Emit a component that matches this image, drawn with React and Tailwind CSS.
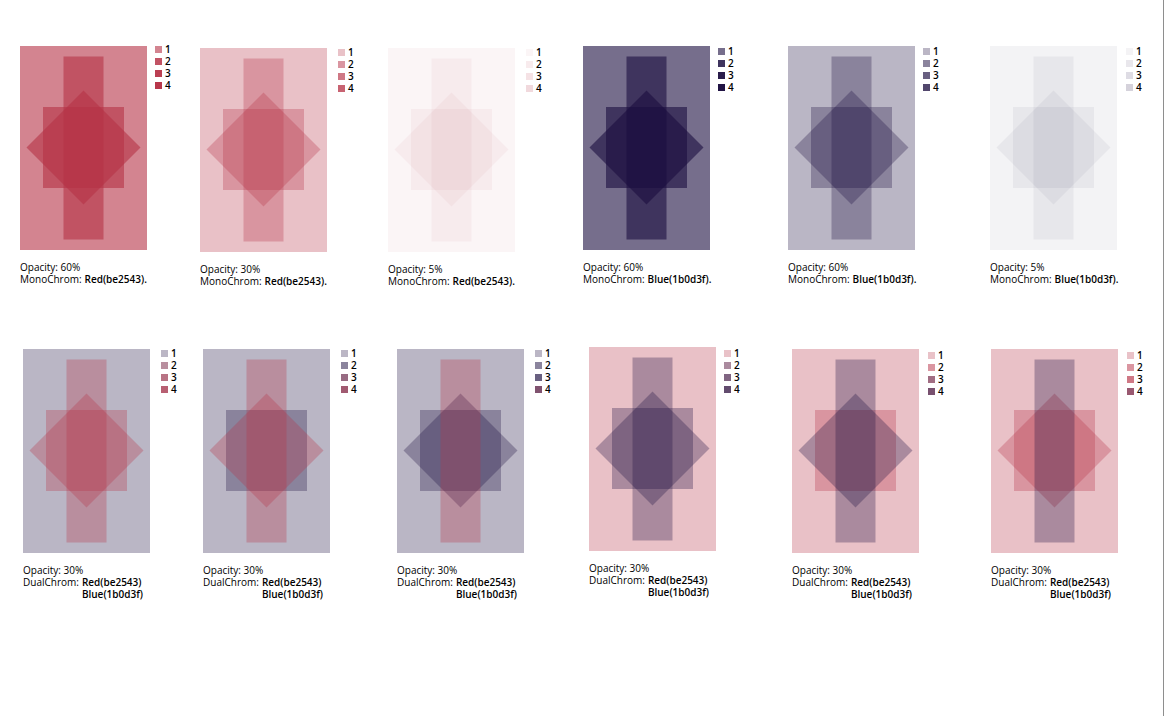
const RED = "#b63246";
const BLUE = "#1b0d3f";

// layers are listed bottom to top: sheet, square, diamond, bar
const rowOne = [
  { box: "ml-[20px]", gap: "ml-[8px]", key: "-mt-[3px]", op: 0.6, layers: [RED, RED, RED, RED], label: "Opacity: 60%", mode: "MonoChrom:", names: ["Red(be2543)."] },
  { box: "ml-[29px] mt-[2px]", gap: "ml-[11px]", key: "-mt-[2px]", op: 0.3, layers: [RED, RED, RED, RED], label: "Opacity: 30%", mode: "MonoChrom:", names: ["Red(be2543)."] },
  { box: "ml-[34px] mt-[2px]", gap: "ml-[11px]", key: "-mt-[2px]", op: 0.05, layers: [RED, RED, RED, RED], label: "Opacity: 5%", mode: "MonoChrom:", names: ["Red(be2543)."] },
  { box: "ml-[41px]", gap: "ml-[8px]", key: "-mt-[1px]", op: 0.6, layers: [BLUE, BLUE, BLUE, BLUE], label: "Opacity: 60%", mode: "MonoChrom:", names: ["Blue(1b0d3f)."] },
  { box: "ml-[54px]", gap: "ml-[8px]", key: "-mt-[1px]", op: 0.3, layers: [BLUE, BLUE, BLUE, BLUE], label: "Opacity: 60%", mode: "MonoChrom:", names: ["Blue(1b0d3f)."] },
  { box: "ml-[51px]", gap: "ml-[9px]", key: "-mt-[1px]", op: 0.05, layers: [BLUE, BLUE, BLUE, BLUE], label: "Opacity: 5%", mode: "MonoChrom:", names: ["Blue(1b0d3f)."] },
];

const dual = ["Red(be2543)", "Blue(1b0d3f)"];

const rowTwo = [
  { box: "ml-[23px] mt-[2px]", gap: "ml-[11px]", key: "-mt-[2px]", op: 0.3, layers: [BLUE, RED, RED, RED] },
  { box: "ml-[26px] mt-[2px]", gap: "ml-[11px]", key: "-mt-[2px]", op: 0.3, layers: [BLUE, BLUE, RED, RED] },
  { box: "ml-[40px] mt-[2px]", gap: "ml-[11px]", key: "-mt-[2px]", op: 0.3, layers: [BLUE, BLUE, BLUE, RED] },
  { box: "ml-[38px]", gap: "ml-[8px]", key: "mt-0", op: 0.3, layers: [RED, BLUE, BLUE, BLUE] },
  { box: "ml-[52px] mt-[2px]", gap: "ml-[9px]", key: "mt-0", op: 0.3, layers: [RED, RED, BLUE, BLUE] },
  { box: "ml-[47px] mt-[2px]", gap: "ml-[9px]", key: "mt-0", op: 0.3, layers: [RED, RED, RED, BLUE] },
].map((p) => ({ ...p, label: "Opacity: 30%", mode: "DualChrom:", names: dual }));

function hexToRgb(hex) {
  const n = parseInt(hex.slice(1), 16);
  return [(n >> 16) & 255, (n >> 8) & 255, n & 255];
}

// colour after stacking the first `count` layers on white paper
function stacked(layers, op, count) {
  let rgb = [255, 255, 255];
  layers.slice(0, count).forEach((hex) => {
    const c = hexToRgb(hex);
    rgb = rgb.map((v, i) => v * (1 - op) + c[i] * op);
  });
  return `rgb(${rgb.map(Math.round).join(",")})`;
}

function Shapes({ layers, op }) {
  const [sheet, square, diamond, bar] = layers;
  return (
    <svg width="127" height="204" viewBox="0 0 127 204" className="block">
      <rect x="0" y="0" width="127" height="204" fill={sheet} fillOpacity={op} />
      <rect x="23" y="61" width="81" height="81" fill={square} fillOpacity={op} />
      <polygon points="63.5,44.5 120.5,101.5 63.5,158.5 6.5,101.5" fill={diamond} fillOpacity={op} />
      <rect x="43.5" y="10.5" width="40" height="183" fill={bar} fillOpacity={op} />
    </svg>
  );
}

function Legend({ layers, op, className }) {
  return (
    <div className={`flex w-4 flex-col ${className}`}>
      {[1, 2, 3, 4].map((n) => (
        <div key={n} className="flex h-[12px] items-center gap-[3px]">
          <span className="block h-[7px] w-[7px] shrink-0" style={{ background: stacked(layers, op, n) }} />
          <span className="text-[10px] font-semibold leading-none text-black">{n}</span>
        </div>
      ))}
    </div>
  );
}

function Swatch({ item }) {
  return (
    <div className={`flex shrink-0 items-start ${item.box}`}>
      <div className="flex w-[127px] flex-col">
        <Shapes layers={item.layers} op={item.op} />
        <div className="mt-[11px] text-[10px] leading-[12px] text-black">
          <div>{item.label}</div>
          <div className="flex whitespace-nowrap">
            <span className="mr-[3px]">{item.mode}</span>
            <div className="flex flex-col font-semibold">
              {item.names.map((name) => (
                <span key={name}>{name}</span>
              ))}
            </div>
          </div>
        </div>
      </div>
      <Legend layers={item.layers} op={item.op} className={`${item.gap} ${item.key}`} />
    </div>
  );
}

export default function App() {
  return (
    <div
      className="flex h-[716px] w-[1164px] flex-col overflow-hidden border-r border-[#8e8e8e] bg-white"
      style={{ fontFamily: '"Open Sans", "Liberation Sans", sans-serif' }}
    >
      <div className="flex h-[347px] items-start pt-[46px]">
        {rowOne.map((item, i) => (
          <Swatch key={i} item={item} />
        ))}
      </div>
      <div className="flex items-start">
        {rowTwo.map((item, i) => (
          <Swatch key={i} item={item} />
        ))}
      </div>
    </div>
  );
}
